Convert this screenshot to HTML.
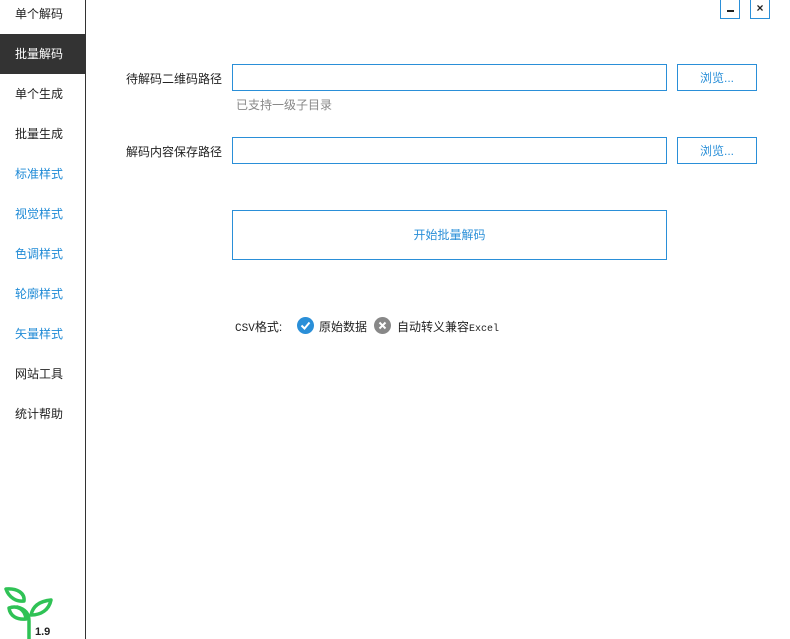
<!DOCTYPE html>
<html><head><meta charset="utf-8"><style>
body{margin:0;width:790px;height:639px;background:#fff;font-family:"Liberation Sans","Noto Sans CJK SC",sans-serif;font-size:12px;position:relative;overflow:hidden;color:#222}
.sb{position:absolute;left:0;top:0;width:85px;height:639px;border-right:1px solid #333}
.it{position:absolute;left:0;width:85px;height:40px;line-height:41px;padding-left:15px;box-sizing:border-box}
.act{background:#333;color:#fff}
.blue{color:#1e8ad6}
.box{position:absolute;border:1px solid #2a8fd8;box-sizing:border-box}
.btn{color:#2a8fd8;text-align:center}
.lbl{position:absolute;font-size:12px}
</style></head><body>
<div class="sb">
<div class="it" style="top:-6px">单个解码</div>
<div class="it act" style="top:34px">批量解码</div>
<div class="it" style="top:74px">单个生成</div>
<div class="it" style="top:114px">批量生成</div>
<div class="it blue" style="top:154px">标准样式</div>
<div class="it blue" style="top:194px">视觉样式</div>
<div class="it blue" style="top:234px">色调样式</div>
<div class="it blue" style="top:274px">轮廓样式</div>
<div class="it blue" style="top:314px">矢量样式</div>
<div class="it" style="top:354px">网站工具</div>
<div class="it" style="top:394px">统计帮助</div>
<svg style="position:absolute;left:2px;top:585px" width="52" height="54" viewBox="0 0 50 54">
<g fill="none" stroke="#2fc255" stroke-width="3.5" stroke-linecap="round" stroke-linejoin="round">
<path d="M26 54 V36 C26 28 22 24 14 22"/>
<path d="M3 4 C14 3 22 8 21 16 C14 17 6 13 3 4 Z"/>
<path d="M6 23 C14 20 22 24 23 34 C14 35 7 31 6 23 Z"/>
<path d="M28 30 C30 20 38 16 48 15 C46 25 38 30 28 30 Z"/>
</g></svg>
<div style="position:absolute;left:35px;top:626px;font-size:11px;font-weight:bold">1.9</div>
</div>
<div class="box" style="left:720px;top:-1px;width:20px;height:20px"><div style="position:absolute;left:6px;top:10px;width:7px;height:2px;background:#222"></div></div>
<div class="box" style="left:750px;top:-1px;width:20px;height:20px;text-align:center;line-height:17px;font-size:12px;font-weight:bold">×</div>
<div class="lbl" style="left:126px;top:70px">待解码二维码路径</div>
<div class="box" style="left:232px;top:64px;width:435px;height:27px"></div>
<div class="box btn" style="left:677px;top:64px;width:80px;height:27px;line-height:26px">浏览...</div>
<div class="lbl" style="left:236px;top:96px;color:#888">已支持一级子目录</div>
<div class="lbl" style="left:126px;top:143px">解码内容保存路径</div>
<div class="box" style="left:232px;top:137px;width:435px;height:27px"></div>
<div class="box btn" style="left:677px;top:137px;width:80px;height:27px;line-height:26px">浏览...</div>
<div class="box btn" style="left:232px;top:210px;width:435px;height:50px;line-height:49px">开始批量解码</div>
<div class="lbl" style="left:235px;top:318px"><span style="font-family:'Liberation Mono','Noto Sans CJK SC',monospace;font-size:11px">CSV</span>格式:</div>
<svg style="position:absolute;left:297px;top:317px" width="17" height="17"><circle cx="8.5" cy="8.5" r="8.5" fill="#2a8fd8"/><path d="M4.5 8.5 L7.5 11.5 L12.5 5.5" stroke="#fff" stroke-width="2" fill="none"/></svg>
<div class="lbl" style="left:319px;top:318px">原始数据</div>
<svg style="position:absolute;left:374px;top:317px" width="17" height="17"><circle cx="8.5" cy="8.5" r="8.5" fill="#888"/><path d="M5.5 5.5 L11.5 11.5 M11.5 5.5 L5.5 11.5" stroke="#fff" stroke-width="2"/></svg>
<div class="lbl" style="left:397px;top:318px">自动转义兼容<span style="font-family:'Liberation Mono',monospace;font-size:10px">Excel</span></div>
</body></html>
